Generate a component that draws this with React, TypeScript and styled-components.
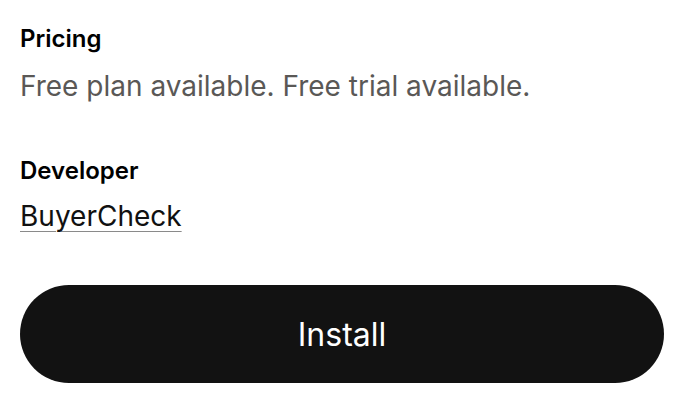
import React from "react";
import styled, { createGlobalStyle } from "styled-components";

const GlobalStyle = createGlobalStyle`
  html, body {
    margin: 0;
    padding: 0;
    background: #ffffff;
    font-family: Inter, "Noto Sans", sans-serif;
  }
`;

const Wrapper = styled.div`
  width: 688px;
  padding: 23px 24px 0 20px;
  box-sizing: border-box;
  display: flex;
  flex-direction: column;
`;

const Section = styled.section`
  display: flex;
  flex-direction: column;
`;

const Label = styled.h3`
  margin: 0;
  font-size: 24px;
  line-height: 32px;
  font-weight: 600;
  color: #000000;
`;

const Value = styled.p`
  margin: 13px 0 0;
  font-size: 28px;
  line-height: 36px;
  font-weight: 400;
  color: #5a5856;
`;

const DevLink = styled.a`
  align-self: flex-start;
  margin-top: 11px;
  font-size: 28px;
  line-height: 36px;
  color: #111111;
  text-decoration: underline;
  text-decoration-color: #8a8a8a;
  text-decoration-thickness: 1px;
  text-underline-offset: 5px;
`;

const Spacer = styled.div<{ h: number }>`
  height: ${props => props.h}px;
`;

const InstallButton = styled.button`
  width: 644px;
  height: 98px;
  border: none;
  border-radius: 49px;
  background: #121212;
  color: #ffffff;
  font-family: Inter, "Noto Sans", sans-serif;
  font-size: 32px;
  font-weight: 400;
  cursor: pointer;
`;

const App: React.FC = () => {
  return (
    <>
      <GlobalStyle />
      <Wrapper>
        <Section>
          <Label>Pricing</Label>
          <Value>Free plan available. Free trial available.</Value>
        </Section>
        <Spacer h={51} />
        <Section>
          <Label>Developer</Label>
          <DevLink href="#">BuyerCheck</DevLink>
        </Section>
        <Spacer h={51} />
        <InstallButton>Install</InstallButton>
      </Wrapper>
    </>
  );
};

export default App;
